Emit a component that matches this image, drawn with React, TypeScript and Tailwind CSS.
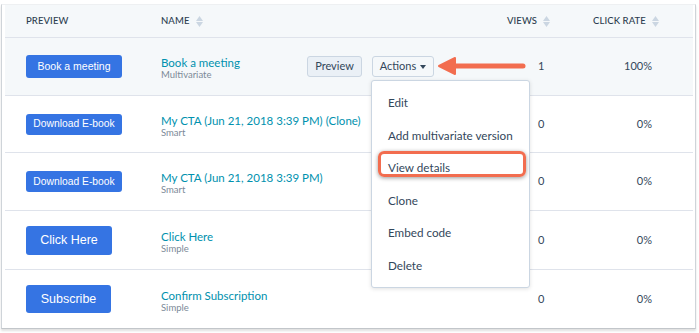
type Row = {
  cta: string;
  ctaClass: string;
  name: string;
  kind: string;
  views: string;
  rate: string;
  height: string;
  highlight?: boolean;
};

const rows: Row[] = [
  { cta: "Book a meeting", ctaClass: "h-[23px] w-[96px] text-[10.5px]", name: "Book a meeting", kind: "Multivariate", views: "1", rate: "100%", height: "h-[58px]", highlight: true },
  { cta: "Download E-book", ctaClass: "h-[21px] w-[96px] text-[10.3px]", name: "My CTA (Jun 21, 2018 3:39 PM) (Clone)", kind: "Smart", views: "0", rate: "0%", height: "h-[57px]" },
  { cta: "Download E-book", ctaClass: "h-[21px] w-[96px] text-[10.3px]", name: "My CTA (Jun 21, 2018 3:39 PM)", kind: "Smart", views: "0", rate: "0%", height: "h-[58px]" },
  { cta: "Click Here", ctaClass: "h-[29px] w-[86px] text-[12.5px]", name: "Click Here", kind: "Simple", views: "0", rate: "0%", height: "h-[59px]" },
  { cta: "Subscribe", ctaClass: "h-[28px] w-[85px] text-[12.5px]", name: "Confirm Subscription", kind: "Simple", views: "0", rate: "0%", height: "h-[58px]" },
];

const menu = ["Edit", "Add multivariate version", "View details", "Clone", "Embed code", "Delete"];

function SortIcon() {
  return (
    <span className="ml-[6px] inline-flex flex-col text-[#cbd6e2]">
      <svg width="7" height="5" viewBox="0 0 7 5"><path d="M3.5 0L7 5H0z" fill="currentColor" /></svg>
      <svg width="7" height="5" viewBox="0 0 7 5" className="mt-[1px]"><path d="M0 0h7L3.5 5z" fill="currentColor" /></svg>
    </span>
  );
}

export default function App() {
  return (
    <div className="relative h-[333px] w-[699px] overflow-hidden bg-white font-['Lato',sans-serif] text-[#33475b]">
      <div className="ml-[1px] mt-[4px] w-[695px] border border-t-[#eef0f2] border-x-[#cfd4d9] border-b-[#c2c6ca] pl-[3px] pr-[2px] shadow-[0_2px_2px_rgba(0,0,0,0.12)]">
        <div className="flex h-[33px] items-center border-b border-[#dfe3eb] bg-[#f5f8fa] pl-[21px] text-[9.5px] font-medium uppercase tracking-[0.1px] text-[#2d3e50]">
          <div className="w-[135px]">Preview</div>
          <div className="flex w-[346px] items-center">Name<SortIcon /></div>
          <div className="flex w-[86px] items-center">Views<SortIcon /></div>
          <div className="flex items-center">Click rate<SortIcon /></div>
        </div>
        {rows.map((r, i) => (
          <div
            key={i}
            className={`flex items-center pl-[21px] ${r.height} ${i < rows.length - 1 ? "border-b border-[#dfe3eb]" : ""} ${r.highlight ? "bg-[#f5f8fa]" : "bg-white"}`}
          >
            <div className="w-[135px]">
              <button className={`flex items-center justify-center rounded-[3px] bg-[#3574e3] font-['Liberation_Sans',sans-serif] text-white ${r.ctaClass}`}>
                {r.cta}
              </button>
            </div>
            <div className="flex w-[377px] items-center">
              <div className="flex w-[146px] flex-col pt-[3px]">
                <span className="whitespace-nowrap text-[11.5px] leading-[13px] text-[#0091ae]">{r.name}</span>
                <span className="text-[9.5px] leading-[11px] text-[#7c8a98]">{r.kind}</span>
              </div>
              {r.highlight && (
                <div className="flex items-center gap-[10px]">
                  <button className="h-[21px] w-[55px] rounded-[3px] border border-[#cbd6e2] bg-[#eaf0f6] text-[11px] text-[#33475b]">Preview</button>
                  <button className="flex h-[21px] w-[62px] items-center justify-center gap-[4px] rounded-[3px] border border-[#cbd6e2] bg-[#f5f8fa] text-[11px] text-[#33475b]">
                    Actions
                    <svg width="6" height="4" viewBox="0 0 6 4"><path d="M0 0h6L3 4z" fill="currentColor" /></svg>
                  </button>
                </div>
              )}
            </div>
            <div className="w-[55px] text-[11px]">{r.views}</div>
            <div className="w-[59px] text-right text-[11px]">{r.rate}</div>
          </div>
        ))}
      </div>

      <div className="absolute left-[371px] top-[80px] h-[208px] w-[159px] rounded-[3px] border border-[#cbd6e2] bg-white pt-[6px] shadow-[0_1px_4px_rgba(0,0,0,0.12)]">
        {menu.map((m) => (
          <div key={m} className="flex h-[32.5px] items-center pl-[16px] text-[11.7px] text-[#33475b]">
            {m}
          </div>
        ))}
      </div>
      <div className="absolute left-[378px] top-[151px] h-[26px] w-[148px] rounded-[6px] border-[3px] border-[#f26d4f] shadow-[0_1px_4px_rgba(0,0,0,0.4)]" />

      <svg className="absolute left-[437px] top-[55px]" width="90" height="22" viewBox="0 0 90 22">
        <path d="M14 11H86" stroke="#f26d4f" strokeWidth="5" strokeLinecap="round" />
        <path d="M2 11L18 3V19Z" fill="#f26d4f" stroke="#f26d4f" strokeWidth="2" strokeLinejoin="round" />
      </svg>
    </div>
  );
}
